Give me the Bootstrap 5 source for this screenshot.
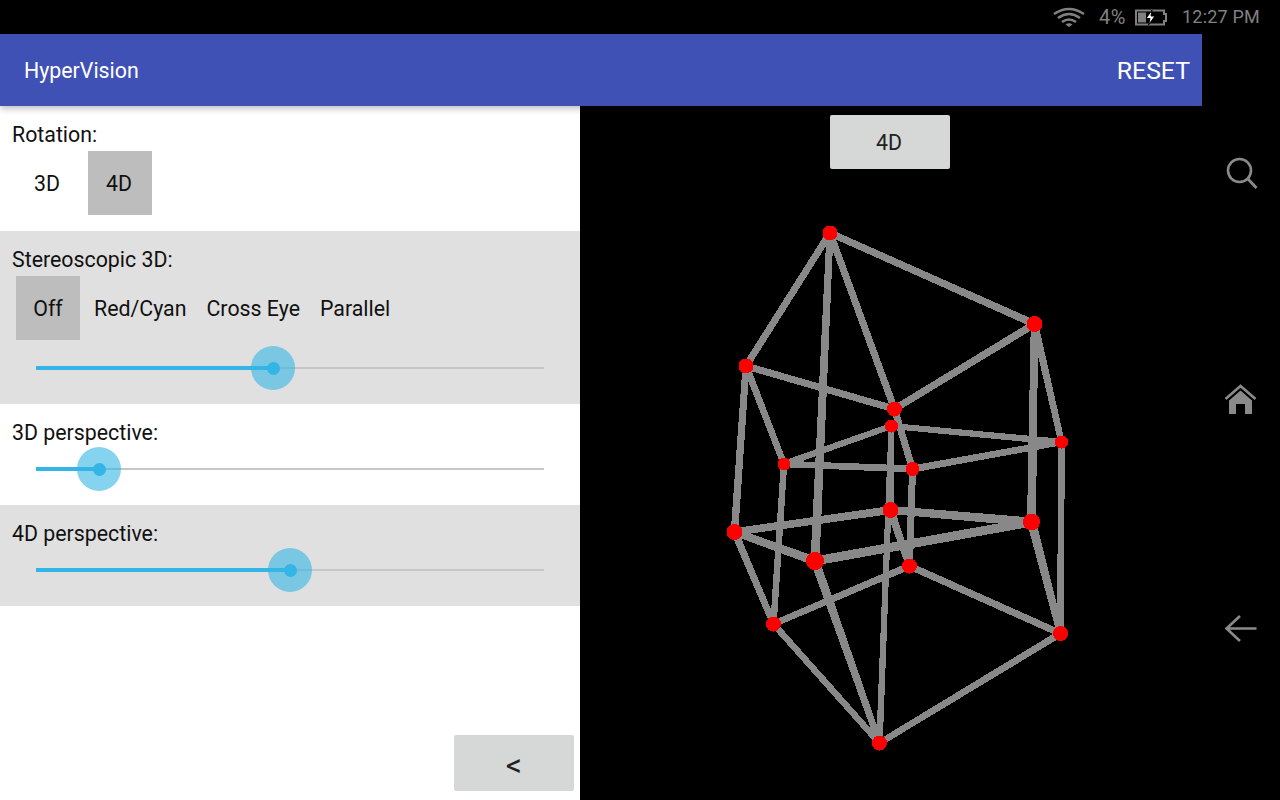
<!DOCTYPE html>
<html lang="en">
<head>
  <meta charset="UTF-8" />
  <meta name="viewport" content="width=device-width, initial-scale=1.0" />
  <title>HyperVision</title>
  <link href="https://cdn.jsdelivr.net/npm/bootstrap@5.3.0/dist/css/bootstrap.min.css" rel="stylesheet" />
  <style>
    html, body {
      height: 100%;
      overflow: hidden;
      background: #000;
      font-family: Roboto, "Liberation Sans", sans-serif;
      color: #111;
    }
    #statusBar {
      height: 34px;
      padding-left: 1053px;
      color: #808080;
      font-size: 18px;
    }
    #statusBar .pct { margin: -1px 0 0 14px; width: 36px; font-size: 20px; letter-spacing: .6px; }
    #statusBar .clock { margin: -1px 0 0 15px; letter-spacing: .2px; }
    #screen { height: 766px; }
    #mainCol { width: 1202px; }
    #appBar {
      height: 72px;
      background: #3f51b5;
      color: #fff;
      padding: 2px 12px 0 24px;
      box-shadow: 0 2px 7px rgba(0, 0, 0, .3);
      z-index: 2;
    }
    #appBar .appTitle { font-size: 21.33px; }
    #appBar .appAction { font-size: 24.8px; }
    #panel {
      width: 580px;
      background: #fff;
      font-size: 21.33px;
    }
    .panelRow { padding: 16px 12px 14px; }
    .panelRow.topRow { padding-bottom: 16px; }
    .panelRow.shaded { background: #e0e0e0; }
    .rowLabel { height: 24px; line-height: 26px; }
    .optRow { margin-top: 5px; padding-left: 4px; }
    .opt {
      min-width: 64px;
      height: 64px;
      padding: 2px 6px 0;
      display: flex;
      align-items: center;
      justify-content: center;
    }
    .topRow .opt { padding-right: 8px; }
    .opt.picked { background: #bdbdbd; }
    .sliderBox {
      position: relative;
      height: 44px;
      margin: 3px 24px 0;
      width: 508px;
    }
    .sliderBox.first { margin-top: 6px; }
    .sliderTrack {
      position: absolute;
      left: 0;
      right: 0;
      top: 21px;
      height: 2px;
      background: #c6c6c6;
    }
    .sliderFill {
      position: absolute;
      left: 0;
      top: 20px;
      height: 4px;
      background: #33b5e5;
    }
    .sliderKnob {
      position: absolute;
      top: 0;
      width: 44px;
      height: 44px;
      margin-left: -22px;
      border-radius: 50%;
      background: rgba(51, 181, 229, .6);
    }
    .sliderKnob::after {
      content: "";
      position: absolute;
      left: 15.5px;
      top: 15.5px;
      width: 13px;
      height: 13px;
      border-radius: 50%;
      background: #33b5e5;
    }
    .greyBtn {
      width: 120px;
      background: #d6d7d7;
      border: 0;
      border-radius: 2px;
      color: #222;
      font-size: 21.33px;
      padding: 0;
    }
    #backBtn { height: 56px; margin: auto 6px 9px auto; font-size: 32px; padding-top: 4px; }
    #canvasArea { width: 622px; background: #000; padding: 9px 2px 0 0; }
    #canvasArea svg { position: absolute; left: 0; top: 0; shape-rendering: crispEdges; }
    #modeBtn { height: 54px; z-index: 1; padding: 2px 2px 0 0; }
    #sideNav { width: 78px; padding-top: 121px; gap: 192px; }
    #sideNav svg { display: block; margin-left: 22px; }
  </style>
</head>
<body>
  <div id="statusBar" class="d-flex align-items-center">
    <svg width="32" height="20" viewBox="0 0 32 20">
      <g fill="none" stroke="#808080" stroke-width="2.6">
        <path d="M1 7 Q16 -3 31 7" />
        <path d="M5 11 Q16 3 27 11" />
        <path d="M9 15 Q16 10 23 15" />
      </g>
      <path d="M12.5 17.5 Q16 15 19.5 17.5 L16 20 Z" fill="#808080" />
    </svg>
    <span class="pct">4%</span>
    <svg width="32" height="17" viewBox="0 0 32 17">
      <path d="M1 1.5H29V5H31V12H29V15.5H1Z" fill="none" stroke="#808080" stroke-width="2" />
      <rect x="3" y="3.500" width="8" height="10" fill="#808080" />
      <path d="M17 1 L11 9.500H15L13.500 16 L20 7H16Z" fill="#fff" stroke="#000" stroke-width="1" />
    </svg>
    <span class="clock">12:27 PM</span>
  </div>

  <div id="screen" class="d-flex">
    <div id="mainCol" class="d-flex flex-column">
      <div id="appBar" class="d-flex align-items-center justify-content-between position-relative">
        <span class="appTitle">HyperVision</span>
        <span class="appAction">RESET</span>
      </div>
      <div class="d-flex flex-grow-1">
        <div id="panel" class="d-flex flex-column">
          <div class="panelRow topRow">
            <div class="rowLabel">Rotation:</div>
            <div class="optRow d-flex gap-2">
              <div class="opt">3D</div>
              <div class="opt picked">4D</div>
            </div>
          </div>
          <div class="panelRow shaded">
            <div class="rowLabel">Stereoscopic 3D:</div>
            <div class="optRow d-flex gap-2">
              <div class="opt picked">Off</div>
              <div class="opt">Red/Cyan</div>
              <div class="opt">Cross Eye</div>
              <div class="opt">Parallel</div>
            </div>
            <div class="sliderBox first" data-value="237"></div>
          </div>
          <div class="panelRow">
            <div class="rowLabel">3D perspective:</div>
            <div class="sliderBox" data-value="63"></div>
          </div>
          <div class="panelRow shaded">
            <div class="rowLabel">4D perspective:</div>
            <div class="sliderBox" data-value="254"></div>
          </div>
          <button id="backBtn" class="btn greyBtn" type="button">&lt;</button>
        </div>
        <div id="canvasArea" class="position-relative d-flex justify-content-center align-items-start">
          <svg id="cube" width="622" height="694" viewBox="580 106 622 694"></svg>
          <button id="modeBtn" class="btn greyBtn position-relative" type="button">4D</button>
        </div>
      </div>
    </div>

    <div id="sideNav" class="d-flex flex-column">
      <svg width="36" height="36" viewBox="0 0 36 36">
        <circle cx="15.500" cy="15.500" r="11.500" fill="none" stroke="#8a8a8a" stroke-width="2.600" />
        <path d="M24 24 L32.500 33" stroke="#8a8a8a" stroke-width="2.800" fill="none" />
      </svg>
      <svg width="36" height="36" viewBox="0 0 36 36">
        <path d="M1.500 16 L16.500 3 L31.500 16" fill="none" stroke="#8a8a8a" stroke-width="2.600" />
        <path d="M16.500 7.500 L28 17.500V31H21V21H12V31H5V17.500Z" fill="#8a8a8a" />
      </svg>
      <svg width="36" height="36" viewBox="0 0 36 36">
        <path d="M2.500 17.500H32.500M16 5 L2.500 17.500 L16 30" fill="none" stroke="#8a8a8a" stroke-width="2.600" />
      </svg>
    </div>
  </div>

  <script src="https://cdn.jsdelivr.net/npm/bootstrap@5.3.0/dist/js/bootstrap.bundle.min.js"></script>
  <script>
    // Sliders
    document.querySelectorAll(".sliderBox").forEach((box) => {
      const value = box.dataset.value;
      box.innerHTML = `
        <div class="sliderTrack"></div>
        <div class="sliderFill" style="width: ${value}px"></div>
        <div class="sliderKnob" style="left: ${value}px"></div>
      `;
    });

    // Tesseract: x, y, node radius, edge width at that node
    const nodes = {
      A: [830, 233, 7.5, 7], B: [1034.5, 324, 8, 7.5], C: [746, 366, 7.5, 7], D: [894.5, 409, 7.5, 7],
      E: [891.5, 426, 6.5, 6], F: [1061.5, 442, 6.5, 6.5], G: [784, 464, 6.5, 6.5], H: [912.5, 469, 7, 7],
      I: [890.5, 510, 8, 8], J: [1031.5, 522, 8.5, 9], K: [734.5, 532, 8, 7.5], L: [815, 561, 9, 9],
      M: [909.5, 566, 7.5, 7], N: [773.5, 624, 7.5, 6.5], O: [1060.5, 633.5, 7.5, 7], P: [879.5, 743, 7.5, 6.5]
    };
    const edges = ["AB", "AC", "AL", "AD", "BD", "BJ", "BF", "CD", "CK", "CG", "DH", "EG", "EF", "EI", "EP", "FH",
      "FO", "GH", "GN", "HM", "IK", "IJ", "IM", "JL", "JO", "KL", "KN", "LP", "MN", "MO", "NP", "OP"];

    let markup = "";
    edges.forEach((e) => {
      const [x1, y1, , w1] = nodes[e[0]];
      const [x2, y2, , w2] = nodes[e[1]];
      const len = Math.hypot(x2 - x1, y2 - y1);
      const nx = (y2 - y1) / len / 2;
      const ny = (x1 - x2) / len / 2;
      const pts = [
        [x1 + nx * w1, y1 + ny * w1], [x2 + nx * w2, y2 + ny * w2],
        [x2 - nx * w2, y2 - ny * w2], [x1 - nx * w1, y1 - ny * w1]
      ];
      markup += `<polygon fill="#888" points="${pts.map((p) => p.join(",")).join(" ")}" />`;
    });
    Object.values(nodes).forEach(([x, y, r]) => {
      markup += `<circle fill="#f00" cx="${x}" cy="${y}" r="${r}" />`;
    });
    document.getElementById("cube").innerHTML = markup;
  </script>
</body>
</html>
